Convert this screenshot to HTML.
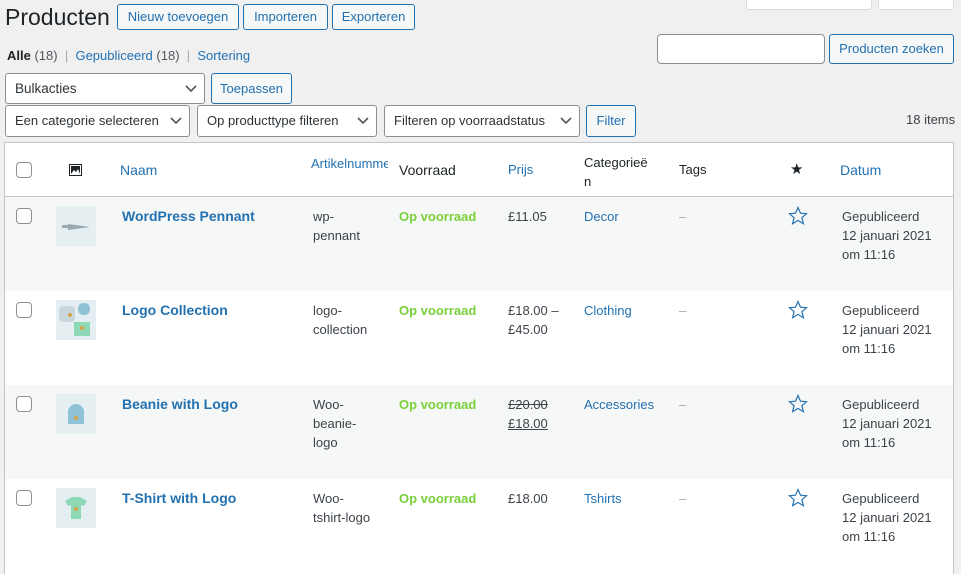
<!DOCTYPE html>
<html><head><meta charset="utf-8"><style>
*{box-sizing:border-box;margin:0;padding:0}
html,body{overflow:hidden}
body{width:961px;height:574px;background:#f0f0f1;font-family:"Liberation Sans",sans-serif;font-size:13px;color:#3c434a;position:relative}
.a{position:absolute;white-space:nowrap}
.btn{position:absolute;border:1px solid #2271b1;color:#2271b1;background:#f6f7f7;border-radius:3px;font-size:13px;text-align:center}
.sel{position:absolute;border:1px solid #8c8f94;background:#fff;border-radius:3px;font-size:13.5px;color:#2c3338;padding-left:9px;white-space:nowrap}
.sel svg{position:absolute;right:7px;top:50%;margin-top:-4px}
.link{color:#2271b1}
.row{position:absolute;left:5px;width:948px;height:94px}
.cb{position:absolute;left:16px;width:16px;height:16px;border:1px solid #8c8f94;border-radius:4px;background:#fff}
.th{position:absolute;left:56px;width:40px;height:40px;background:#e5eef1}
.t{position:absolute;line-height:19px}
.name{font-weight:bold;color:#2271b1;font-size:14px}
.stock{color:#7ad03a;font-weight:bold}
</style></head><body>
<div class="btn" style="left:746px;top:-12px;width:126px;height:22px;border-color:#dcdcde;background:#fff"></div>
<div class="btn" style="left:878px;top:-12px;width:76px;height:22px;border-color:#dcdcde;background:#fff"></div>
<div class="a" style="left:5px;top:4px;font-size:23px;color:#1d2327">Producten</div>
<div class="btn" style="left:117px;top:4px;width:122px;height:26px;line-height:24px">Nieuw toevoegen</div>
<div class="btn" style="left:243px;top:4px;width:85px;height:26px;line-height:24px">Importeren</div>
<div class="btn" style="left:332px;top:4px;width:83px;height:26px;line-height:24px">Exporteren</div>
<div class="a" style="left:7px;top:48px"><b style="color:#1d2327;font-weight:600">Alle</b> <span style="color:#50575e">(18)</span> <span style="color:#a7aaad">&nbsp;|&nbsp;</span> <span class="link">Gepubliceerd</span> <span style="color:#50575e">(18)</span> <span style="color:#a7aaad">&nbsp;|&nbsp;</span> <span class="link">Sortering</span></div>
<div class="a" style="left:657px;top:34px;width:168px;height:30px;border:1px solid #8c8f94;border-radius:4px;background:#fff"></div>
<div class="btn" style="left:829px;top:34px;width:125px;height:30px;line-height:28px">Producten zoeken</div>
<div class="sel" style="left:5px;top:73px;width:200px;height:31px;line-height:29px">Bulkacties<svg width="12" height="8"><path d="M1 1l5 5 5-5" stroke="#50575e" stroke-width="1.6" fill="none"/></svg></div>
<div class="btn" style="left:211px;top:73px;width:81px;height:31px;line-height:29px">Toepassen</div>
<div class="sel" style="left:5px;top:105px;width:185px;height:32px;line-height:30px;font-size:13px">Een categorie selecteren<svg width="12" height="8"><path d="M1 1l5 5 5-5" stroke="#50575e" stroke-width="1.6" fill="none"/></svg></div>
<div class="sel" style="left:197px;top:105px;width:180px;height:32px;line-height:30px;font-size:13px">Op producttype filteren<svg width="12" height="8"><path d="M1 1l5 5 5-5" stroke="#50575e" stroke-width="1.6" fill="none"/></svg></div>
<div class="sel" style="left:384px;top:105px;width:196px;height:32px;line-height:30px;font-size:13px">Filteren op voorraadstatus<svg width="12" height="8"><path d="M1 1l5 5 5-5" stroke="#50575e" stroke-width="1.6" fill="none"/></svg></div>
<div class="btn" style="left:586px;top:105px;width:50px;height:32px;line-height:30px">Filter</div>
<div class="a" style="left:906px;top:112px;color:#3c434a">18 items</div>
<div class="a" style="left:4px;top:142px;width:950px;height:440px;border:1px solid #c3c4c7;background:#fff"></div>
<div class="row" style="top:143px;height:54px;background:#fff;border-bottom:1px solid #c3c4c7"></div>
<div class="cb" style="top:162px"></div>
<svg class="a" style="left:69px;top:164px" width="13" height="12"><rect x="0.5" y="0.5" width="12" height="11" fill="#fff" stroke="#1d2327"/><rect x="2" y="2" width="9" height="8" fill="#1d2327"/><path d="M2 10l3-4 2 2 2-3 2 5z" fill="#fff"/></svg>
<div class="a link" style="left:120px;top:162px;font-size:14px">Naam</div>
<div class="a link" style="left:311px;top:156px;width:77px;overflow:hidden">Artikelnummer</div>
<div class="a" style="left:399px;top:162px;font-size:14px;color:#1d2327">Voorraad</div>
<div class="a link" style="left:508px;top:162px">Prijs</div>
<div class="a" style="left:584px;top:153px;line-height:19px;color:#1d2327">Categorieë<br>n</div>
<div class="a" style="left:679px;top:162px;color:#1d2327">Tags</div>
<div class="a" style="left:790px;top:160px;font-size:15px;color:#1d2327">★</div>
<div class="a link" style="left:840px;top:162px;font-size:14px">Datum</div>

<div class="row" style="top:197px;background:#f6f7f7"></div>
<div class="row" style="top:291px;background:#fff"></div>
<div class="row" style="top:385px;background:#f6f7f7"></div>
<div class="row" style="top:479px;background:#fff"></div>

<div class="cb" style="top:208px"></div><div class="th" style="top:206px"><svg width="40" height="40"><path d="M6 19h6v3H6zM12 18l22 3-22 3z" fill="#9aaab0"/></svg></div>
<div class="t name" style="left:122px;top:207px">WordPress Pennant</div>
<div class="t" style="left:313px;top:207px">wp-<br>pennant</div>
<div class="t stock" style="left:399px;top:207px">Op voorraad</div>
<div class="t" style="left:508px;top:207px">£11.05</div>
<div class="t link" style="left:584px;top:207px">Decor</div>

<div class="cb" style="top:302px"></div><div class="th" style="top:300px"><svg width="40" height="40"><rect x="3" y="6" width="16" height="16" rx="4" fill="#c9d6dc"/><rect x="22" y="3" width="12" height="12" rx="5" fill="#8fc3d6"/><path d="M18 22h16v14H18z" fill="#8fd8b5"/><circle cx="14" cy="15" r="2" fill="#d4a44a"/><circle cx="26" cy="28" r="2" fill="#d4a44a"/></svg></div>
<div class="t name" style="left:122px;top:301px">Logo Collection</div>
<div class="t" style="left:313px;top:301px">logo-<br>collection</div>
<div class="t stock" style="left:399px;top:301px">Op voorraad</div>
<div class="t" style="left:508px;top:301px">£18.00 –<br>£45.00</div>
<div class="t link" style="left:584px;top:301px">Clothing</div>

<div class="cb" style="top:396px"></div><div class="th" style="top:394px"><svg width="40" height="40"><path d="M12 30V18a8 8 0 0116 0v12z" fill="#8fc3d6"/><circle cx="20" cy="24" r="2" fill="#d4a44a"/></svg></div>
<div class="t name" style="left:122px;top:395px">Beanie with Logo</div>
<div class="t" style="left:313px;top:395px">Woo-<br>beanie-<br>logo</div>
<div class="t stock" style="left:399px;top:395px">Op voorraad</div>
<div class="t" style="left:508px;top:395px"><s>£20.00</s><br><u>£18.00</u></div>
<div class="t link" style="left:584px;top:395px">Accessories</div>

<div class="cb" style="top:490px"></div><div class="th" style="top:488px"><svg width="40" height="40"><path d="M9 13l7-4h8l7 4-3 5-3-1v14H15V17l-3 1z" fill="#8fd8b5"/><circle cx="20" cy="21" r="2" fill="#d4a44a"/></svg></div>
<div class="t name" style="left:122px;top:489px">T-Shirt with Logo</div>
<div class="t" style="left:313px;top:489px">Woo-<br>tshirt-logo</div>
<div class="t stock" style="left:399px;top:489px">Op voorraad</div>
<div class="t" style="left:508px;top:489px">£18.00</div>
<div class="t link" style="left:584px;top:489px">Tshirts</div>

<div class="t" style="left:679px;top:207px;color:#a7aaad">–</div>
<div class="t" style="left:679px;top:301px;color:#a7aaad">–</div>
<div class="t" style="left:679px;top:395px;color:#a7aaad">–</div>
<div class="t" style="left:679px;top:489px;color:#a7aaad">–</div>

<svg class="a" style="left:788px;top:206px" width="20" height="20"><path d="M10 1.5l2.5 5.7 6.1.5-4.7 4 1.5 6-5.4-3.3-5.4 3.3 1.5-6-4.7-4 6.1-.5z" fill="none" stroke="#2271b1" stroke-width="1.2"/></svg>
<svg class="a" style="left:788px;top:300px" width="20" height="20"><path d="M10 1.5l2.5 5.7 6.1.5-4.7 4 1.5 6-5.4-3.3-5.4 3.3 1.5-6-4.7-4 6.1-.5z" fill="none" stroke="#2271b1" stroke-width="1.2"/></svg>
<svg class="a" style="left:788px;top:394px" width="20" height="20"><path d="M10 1.5l2.5 5.7 6.1.5-4.7 4 1.5 6-5.4-3.3-5.4 3.3 1.5-6-4.7-4 6.1-.5z" fill="none" stroke="#2271b1" stroke-width="1.2"/></svg>
<svg class="a" style="left:788px;top:488px" width="20" height="20"><path d="M10 1.5l2.5 5.7 6.1.5-4.7 4 1.5 6-5.4-3.3-5.4 3.3 1.5-6-4.7-4 6.1-.5z" fill="none" stroke="#2271b1" stroke-width="1.2"/></svg>

<div class="t" style="left:842px;top:207px">Gepubliceerd<br>12 januari 2021<br>om 11:16</div>
<div class="t" style="left:842px;top:301px">Gepubliceerd<br>12 januari 2021<br>om 11:16</div>
<div class="t" style="left:842px;top:395px">Gepubliceerd<br>12 januari 2021<br>om 11:16</div>
<div class="t" style="left:842px;top:489px">Gepubliceerd<br>12 januari 2021<br>om 11:16</div>
</body></html>
